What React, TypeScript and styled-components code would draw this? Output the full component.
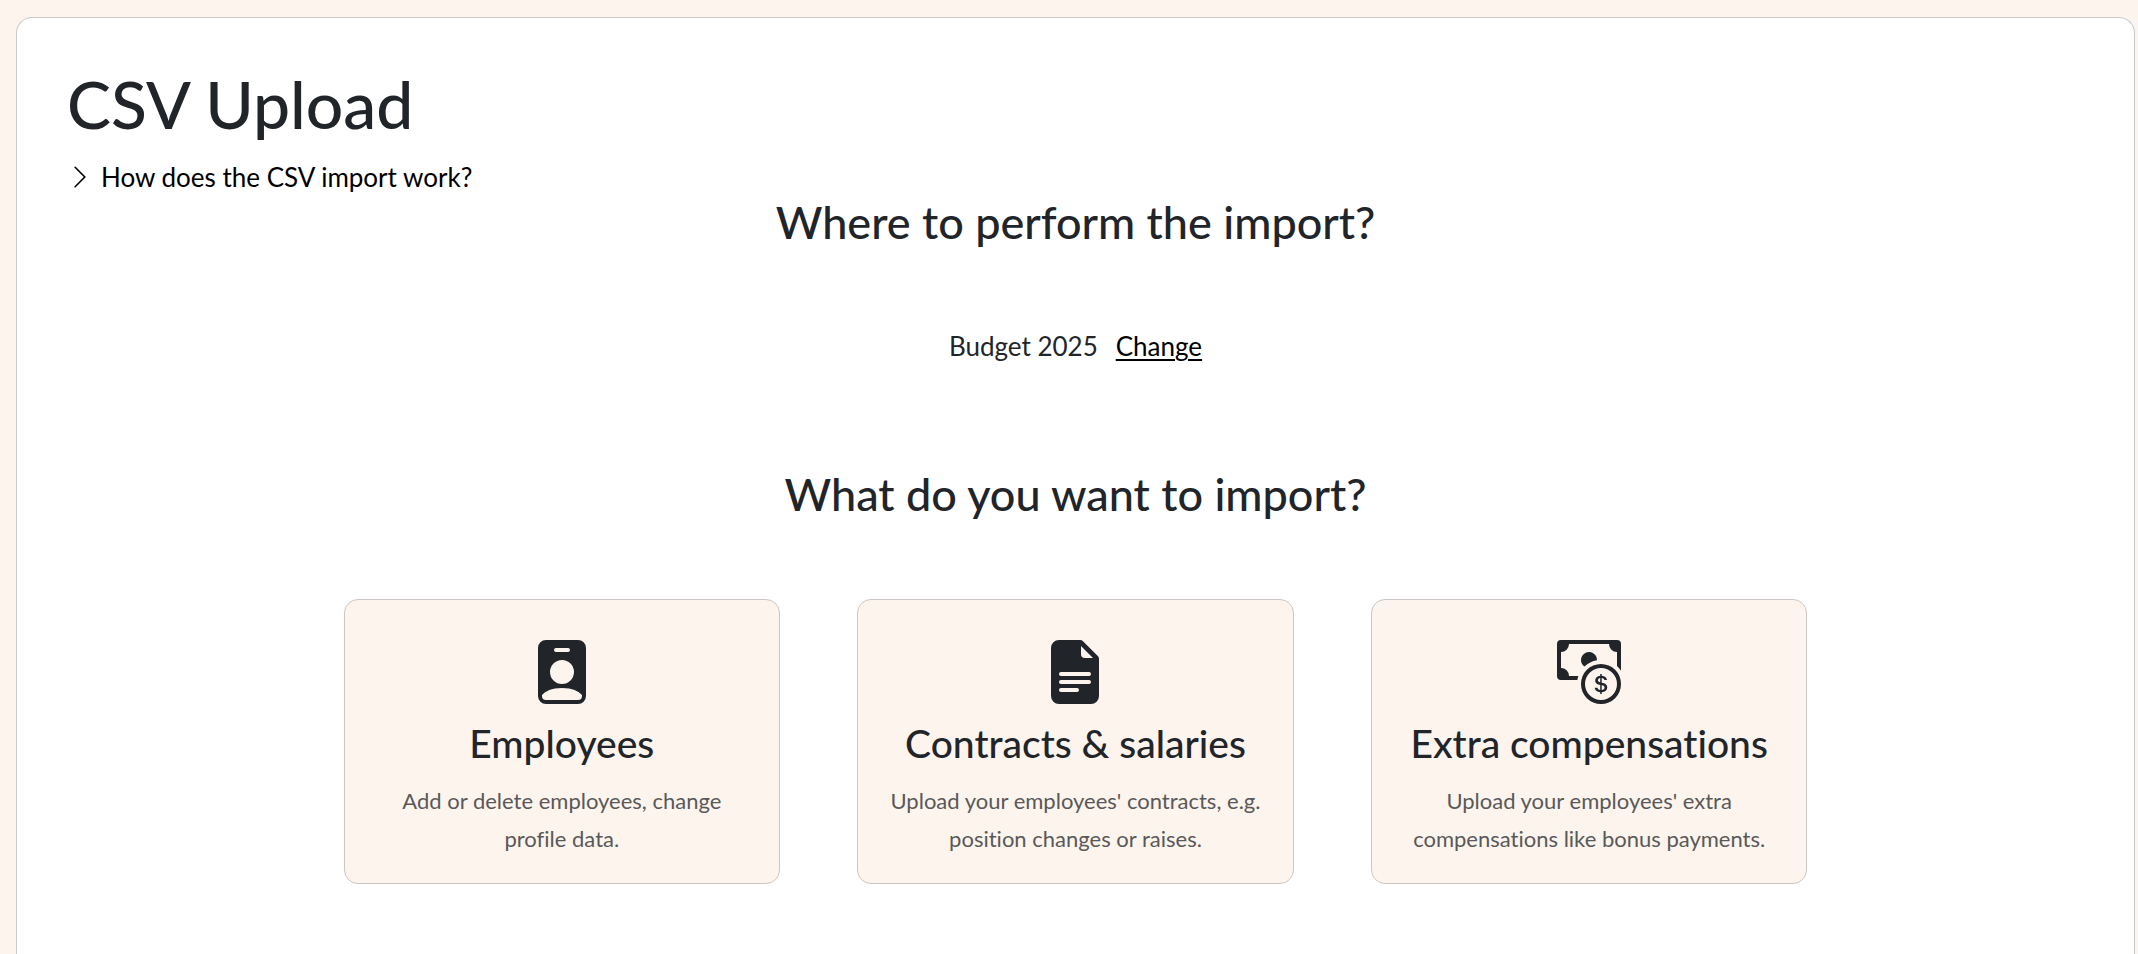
import React from 'react';
import styled, { createGlobalStyle } from 'styled-components';
import type { IconType } from 'react-icons';
import {
  BsCashCoin,
  BsChevronRight,
  BsFileEarmarkTextFill,
  BsPersonBadgeFill,
} from 'react-icons/bs';

const GlobalStyle = createGlobalStyle`
  *, *::before, *::after {
    box-sizing: border-box;
  }

  body {
    margin: 0;
    background: #fdf4ee;
    color: #212529;
    font-family: Lato, 'Liberation Sans', sans-serif;
    font-size: 26px;
    font-variant-ligatures: none;
    line-height: 38px;
  }
`;

const Page = styled.div`
  display: flex;
  min-height: 100vh;
  padding: 17px 3px 0 16px;
`;

const Panel = styled.main`
  flex: 1;
  min-width: 0;
  padding: 48px 50px;
  background: #fff;
  border: 1px solid #c8c8c8;
  border-bottom: 0;
  border-radius: 16px 16px 0 0;
`;

const Title = styled.h1`
  margin: 0 0 16px;
  font-size: 66px;
  font-weight: 500;
  line-height: 76px;
`;

const Help = styled.details`
  color: #000;
`;

const HelpSummary = styled.summary`
  display: flex;
  align-items: center;
  gap: 8px;
  width: fit-content;
  list-style: none;
  cursor: pointer;

  &::-webkit-details-marker {
    display: none;
  }
`;

const HelpText = styled.p`
  margin: 8px 0 16px;
`;

const Section = styled.section`
  display: flex;
  flex-direction: column;
  align-items: center;
`;

const Question = styled.h2`
  margin: 0;
  font-size: 45px;
  font-weight: 500;
  line-height: 52px;
  text-align: center;
`;

const Target = styled.div`
  display: flex;
  gap: 18px;
  margin: 79px 0 103px;
`;

const ChangeLink = styled.a`
  color: #000;
  text-decoration: underline;
  text-decoration-thickness: 2px;
  text-underline-offset: 3px;
`;

const CardGrid = styled.div`
  display: grid;
  grid-template-columns: repeat(auto-fit, minmax(400px, 1fr));
  gap: 77px;
  width: 100%;
  max-width: 1464px;
  margin-top: 79px;
`;

const Card = styled.button`
  display: flex;
  flex-direction: column;
  align-items: center;
  gap: 16px;
  padding: 40px 28px 25px;
  background: #fdf4ee;
  border: 1px solid #cdc6c2;
  border-radius: 14px;
  color: inherit;
  font-family: inherit;
  font-variant-ligatures: none;
  text-align: center;
  cursor: pointer;
`;

const CardTitle = styled.span`
  font-size: 39px;
  font-weight: 500;
  line-height: 46px;
`;

const CardText = styled.span`
  color: #595959;
  font-size: 22px;
  line-height: 38px;
`;

interface ImportKind {
  icon: IconType;
  title: string;
  text: string;
}

const importKinds: ImportKind[] = [
  {
    icon: BsPersonBadgeFill,
    title: 'Employees',
    text: 'Add or delete employees, change profile data.',
  },
  {
    icon: BsFileEarmarkTextFill,
    title: 'Contracts & salaries',
    text: "Upload your employees' contracts, e.g. position changes or raises.",
  },
  {
    icon: BsCashCoin,
    title: 'Extra compensations',
    text: "Upload your employees' extra compensations like bonus payments.",
  },
];

export default function App() {
  return (
    <>
      <GlobalStyle />
      <Page>
        <Panel>
          <Title>CSV Upload</Title>
          <Help>
            <HelpSummary>
              <BsChevronRight size={26} aria-hidden />
              How does the CSV import work?
            </HelpSummary>
            <HelpText>Choose a budget, pick a data type and upload your file.</HelpText>
          </Help>
          <Section>
            <Question>Where to perform the import?</Question>
            <Target>
              <span>Budget 2025</span>
              <ChangeLink href="#budget">Change</ChangeLink>
            </Target>
          </Section>
          <Section>
            <Question>What do you want to import?</Question>
            <CardGrid>
              {importKinds.map(({ icon: Icon, title, text }) => (
                <Card key={title} type="button">
                  <Icon size={64} aria-hidden />
                  <CardTitle>{title}</CardTitle>
                  <CardText>{text}</CardText>
                </Card>
              ))}
            </CardGrid>
          </Section>
        </Panel>
      </Page>
    </>
  );
}
